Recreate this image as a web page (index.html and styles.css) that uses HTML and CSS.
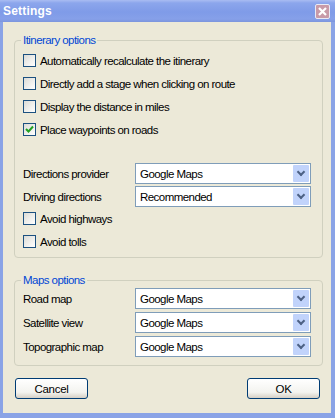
FILE: index.html
```html
<!DOCTYPE html>
<html lang="en">
<head>
  <meta charset="UTF-8">
  <title>Settings</title>
  <link rel="stylesheet" href="styles.css">
</head>
<body>

  <div class="window">
    <!-- Title bar -->
    <div class="titlebar">
      <span class="title">Settings</span>
      <span class="close">
        <svg width="13" height="13" viewBox="0 0 13 13"><path d="M3 3 L10 10 M10 3 L3 10" stroke="#fff" stroke-width="2.2"/></svg>
      </span>
    </div>

    <div class="content">
      <!-- Itinerary -->
      <fieldset class="group">
        <legend>Itinerary options</legend>
        <label class="check"><span class="box"></span>Automatically recalculate the itinerary</label>
        <label class="check"><span class="box"></span>Directly add a stage when clicking on route</label>
        <label class="check"><span class="box"></span>Display the distance in miles</label>
        <label class="check"><span class="box checked"><svg width="9" height="9" viewBox="0 0 9 9"><path d="M1 4 L3.5 6.5 L8 1.5" stroke="#21a121" stroke-width="2" fill="none"/></svg></span>Place waypoints on roads</label>

        <div class="rows first">
          <div class="row"><span class="lbl">Directions provider</span><div class="select">Google Maps<span class="arrow"></span></div></div>
          <div class="row"><span class="lbl">Driving directions</span><div class="select">Recommended<span class="arrow"></span></div></div>
        </div>
        <label class="check"><span class="box"></span>Avoid highways</label>
        <label class="check"><span class="box"></span>Avoid tolls</label>
      </fieldset>

      <!-- Maps -->
      <fieldset class="group maps">
        <legend>Maps options</legend>
        <div class="rows">
          <div class="row"><span class="lbl">Road map</span><div class="select">Google Maps<span class="arrow"></span></div></div>
          <div class="row"><span class="lbl">Satellite view</span><div class="select">Google Maps<span class="arrow"></span></div></div>
          <div class="row"><span class="lbl">Topographic map</span><div class="select">Google Maps<span class="arrow"></span></div></div>
        </div>
      </fieldset>

      <div class="buttons">
        <button class="btn">Cancel</button>
        <button class="btn">OK</button>
      </div>
    </div>
  </div>

</body>
</html>
```

FILE: styles.css
```css
body { margin: 0; padding: 0; font-family: "Liberation Sans", Arial, sans-serif; font-size: 11.5px; letter-spacing: -0.55px; color: #000; }
.window { width: 335px; height: 418px; box-sizing: border-box; background: #ece9d8; border: solid #8aa3e6; border-width: 0 4px 5px 3px; display: flex; flex-direction: column; }
.titlebar { height: 22px; margin: 0 -4px 0 -3px; padding: 0 5px 0 3px; display: flex; align-items: center; justify-content: space-between; background: linear-gradient(#a9bcf2 0, #8ca6ec 3px, #7f9be8 12px, #86a0e9 19px, #7c95dd 22px); }
.title { color: #fff; font-weight: bold; font-size: 12px; letter-spacing: 0.2px; }
.close { width: 15px; height: 15px; box-sizing: border-box; border: 1px solid #e8eaf5; border-radius: 2px; background: #c89aa8; display: flex; align-items: center; justify-content: center; }
.content { padding: 11px 8px 0 11px; flex: 1; display: flex; flex-direction: column; }
.group { margin: 0; padding: 2px 11px 4px 8px; border: 1px solid #d0d0bf; border-radius: 4px; }
.group legend { color: #0046d5; padding: 0 2px; margin-left: -2px; font-size: 11.5px; line-height: 14px; }
.maps { margin-top: 15px; padding-top: 1px; padding-bottom: 8px; }
.check { display: flex; align-items: center; height: 23px; }
.box { width: 13px; height: 13px; box-sizing: border-box; border: 1px solid #1c5180; background: linear-gradient(135deg, #dcdcd6, #fff); margin-right: 4px; display: flex; align-items: center; justify-content: center; }
.rows { display: flex; flex-direction: column; gap: 3px; }
.rows.first { margin-top: 22px; gap: 2px; }
.row { display: flex; align-items: center; height: 21px; }
.lbl { width: 112px; }
.select { flex: 1; height: 21px; box-sizing: border-box; border: 1px solid #7f9db9; background: #fff; display: flex; align-items: center; padding-left: 4px; position: relative; }
.arrow { position: absolute; right: 1px; top: 1px; width: 16px; height: 17px; background: #c1d3fb; border-radius: 1px; }
.arrow::after { content: ""; position: absolute; left: 5px; top: 4px; width: 4px; height: 4px; border: solid #4d6185; border-width: 0 2px 2px 0; transform: rotate(45deg); }
.buttons { display: flex; justify-content: space-between; margin-top: 12px; padding: 0 3px 0 1px; }
.btn { width: 73px; height: 21px; font-family: inherit; font-size: 11.5px; letter-spacing: -0.3px; color: #000; border: 1px solid #003c74; border-radius: 3px; background: linear-gradient(#fff, #f3f3ef 70%, #d6d0c5); padding: 0; }
```
